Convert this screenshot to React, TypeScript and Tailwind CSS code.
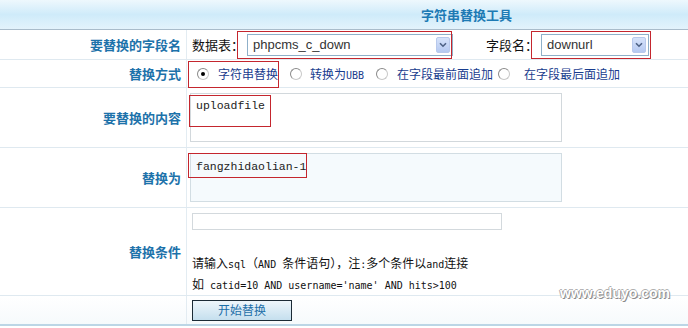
import React from "react";

const cjk = "font-['SimSun','Noto_Sans_CJK_SC',sans-serif]";
const mono = "font-['DejaVu_Sans_Mono','Liberation_Mono',monospace] text-[10px]";

const Label = ({ children }: { children: React.ReactNode }) => (
  <div className="w-[187px] shrink-0 border-r border-[#e3ecf2] flex items-center justify-end pr-[5px] text-[13px] font-bold text-[#1d72aa]">
    {children}
  </div>
);

const Mark = ({ className }: { className: string }) => (
  <div className={"absolute border-[1.5px] border-[#c4262e] pointer-events-none " + className} />
);

const Select = ({ value, width }: { value: string; width: string }) => (
  <div className={"relative h-[22px] border border-[#8fb0c9] bg-white flex items-center " + width}>
    <span className="pl-[5px] text-[13px] text-[#333] font-['Liberation_Sans',sans-serif]">{value}</span>
    <span className="absolute right-[2px] top-[2px] w-[14px] h-[16px] rounded-[2px] bg-gradient-to-b from-[#d7e3fa] to-[#b5c9f1] border border-[#b8c9ec] flex items-center justify-center">
      <svg width="8" height="6" viewBox="0 0 8 6">
        <path d="M1 1.2 L4 4.2 L7 1.2" fill="none" stroke="#4d6185" strokeWidth="1.6" />
      </svg>
    </span>
  </div>
);

const Radio = ({ checked }: { checked?: boolean }) => (
  <span className="w-[12px] h-[12px] rounded-full bg-white border border-[#c8c8c8] border-t-[#8a8a8a] border-l-[#8a8a8a] flex items-center justify-center">
    {checked && <span className="w-[4px] h-[4px] rounded-full bg-black" />}
  </span>
);

export default function App() {
  return (
    <div className={"relative w-[688px] h-[328px] bg-white overflow-hidden text-[12px] " + cjk}>
      {/* header */}
      <div className="h-[30px] border-b border-[#a9bccb] bg-gradient-to-b from-[#eef8fd] via-[#cfebfa] to-[#e3f3fc] flex">
        <div className="w-[187px]" />
        <div className="flex-1 flex items-center justify-center pl-[58px] text-[13px] font-bold text-[#1d7ab4]">
          字符串替换工具
        </div>
      </div>

      {/* row 1 */}
      <div className="h-[30px] border-b border-[#dfe9f0] flex">
        <Label>要替换的字段名</Label>
        <div className="flex-1 flex items-center pl-[5px]">
          <span className="text-[13px] text-[#111] mr-[3px]">数据表：</span>
          <Select value="phpcms_c_down" width="w-[206px]" />
          <span className="text-[13px] text-[#111] ml-[33px] mr-[3px]">字段名：</span>
          <Select value="downurl" width="w-[108px]" />
        </div>
      </div>

      {/* row 2 */}
      <div className="h-[28px] border-b border-[#dfe9f0] flex">
        <Label>替换方式</Label>
        <div className="flex-1 flex items-center pl-[10px] text-[12px] text-[#183c8e]">
          <Radio checked />
          <span className="ml-[9px]">字符串替换</span>
          <span className="ml-[12px]"><Radio /></span>
          <span className="ml-[8px]">转换为<span className={mono}>UBB</span></span>
          <span className="ml-[12px]"><Radio /></span>
          <span className="ml-[9px]">在字段最前面追加</span>
          <span className="ml-[5px]"><Radio /></span>
          <span className="ml-[14px]">在字段最后面追加</span>
        </div>
      </div>

      {/* row 3 */}
      <div className="h-[60px] border-b border-[#dfe9f0] flex">
        <Label>要替换的内容</Label>
        <div className="flex-1 flex items-center pl-[3px]">
          <div className="w-[372px] h-[49px] border border-[#d2d8dc] bg-white px-[5px] pt-[3px] font-['Liberation_Mono',monospace] text-[11.5px] text-[#222]">
            uploadfile
          </div>
        </div>
      </div>

      {/* row 4 */}
      <div className="h-[60px] border-b border-[#dfe9f0] flex">
        <Label>替换为</Label>
        <div className="flex-1 flex items-center pl-[3px]">
          <div className="w-[372px] h-[49px] border border-[#d2dde3] bg-[#f5fafd] px-[5px] pt-[4px] font-['Liberation_Mono',monospace] text-[11.5px] text-[#222]">
            fangzhidaolian-1
          </div>
        </div>
      </div>

      {/* row 5 */}
      <div className="h-[88px] border-b border-[#dfe9f0] flex">
        <Label>替换条件</Label>
        <div className="flex-1 flex flex-col pl-[5px] pt-[5px] text-[#111] text-[12px]">
          <div className="w-[310px] h-[20px] border border-[#d3d9dd] bg-white" />
          <div className="mt-[23px] leading-[19px] whitespace-pre">
            请输入<span className={mono}>sql</span>（<span className={mono}>AND </span>条件语句），注<span className={mono}>:</span>多个条件以<span className={mono}>and</span>连接
          </div>
          <div className="leading-[19px] whitespace-pre">
            如<span className={mono}> catid=10 AND username='name' AND hits&gt;100</span>
          </div>
        </div>
      </div>

      {/* row 6 */}
      <div className="h-[30px] border-b-2 border-[#bcd6e6] flex bg-gradient-to-b from-white to-[#f6fafc]">
        <Label>{""}</Label>
        <div className="flex-1 flex items-center pl-[5px]">
          <button className="w-[100px] h-[21px] border border-[#1c2b36] bg-gradient-to-b from-[#eef6fb] to-[#c5dfee] text-[12px] text-[#1d6fa8]">
            开始替换
          </button>
        </div>
      </div>

      {/* watermark */}
      <div className="absolute left-[560px] top-[283px] text-[14px] font-bold text-white font-['Liberation_Sans',sans-serif] [text-shadow:1px_1px_0_#8c8c8c,-1px_0_0_#b0b0b0,0_-1px_0_#b0b0b0]">
        www.eduyo.com
      </div>

      {/* annotation boxes */}
      <Mark className="left-[237px] top-[31px] w-[215px] h-[28px]" />
      <Mark className="left-[531px] top-[31px] w-[120px] h-[28px]" />
      <Mark className="left-[188px] top-[61px] w-[91px] h-[27px]" />
      <Mark className="left-[189px] top-[95px] w-[82px] h-[32px]" />
      <Mark className="left-[188px] top-[153px] w-[119px] h-[25px]" />
    </div>
  );
}
